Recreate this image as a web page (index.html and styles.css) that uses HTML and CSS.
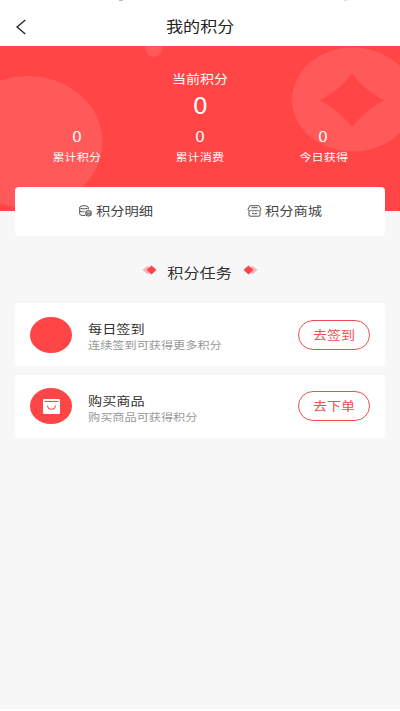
FILE: index.html
```html
<!DOCTYPE html>
<html lang="zh-CN">
<head>
<meta charset="utf-8">
<title>我的积分</title>
<link rel="stylesheet" href="styles.css">
</head>
<body>
<main class="screen">
  <header class="navbar">
    <svg class="back" width="12" height="16" viewBox="0 0 12 16"><path d="M10.3 1 2 8l8.300 7" /></svg>
    <h1 class="title"><span class="wide">我的积分</span></h1>
    <i class="speck speck-a"></i><i class="speck speck-b"></i>
  </header>
  <section class="hero">
    <svg class="hero-art" width="400" height="165" viewBox="0 46 400 165">
      <ellipse cx="28" cy="142" rx="74.500" ry="66" />
      <ellipse cx="154" cy="46" rx="9" ry="11" />
      <path fill-rule="evenodd" d="M292 99.500a61 52 0 1 0 122 0a61 52 0 1 0-122 0zM352 73Q364 90 384 100.500Q364 111 352 127.500Q340 111 320 100.500Q340 90 352 73z" />
    </svg>
    <div class="current"><span class="wide">当前积分</span></div>
    <div class="total"><span class="wide">0</span></div>
    <div class="stats">
      <div class="stat"><b class="wide">0</b><span class="wide">累计积分</span></div>
      <div class="stat"><b class="wide">0</b><span class="wide">累计消费</span></div>
      <div class="stat"><b class="wide">0</b><span class="wide">今日获得</span></div>
    </div>
  </section>
  <nav class="links">
    <a class="link">
      <svg width="13" height="12" viewBox="0 0 13 12"><ellipse cx="5" cy="2.300" rx="4.300" ry="1.600"/><path d="M.7 2.300v6.700c0 .9 1.700 1.500 4.300 1.500h1M9.300 2.300v2M.7 5.500c0 1 2 1.400 4.800 1.400"/><path class="coin" d="M6.800 6.200q2.700-1.700 5.400 0v4.200q-2.700 1.500-5.400 0zM6.800 7.600q2.700 1.200 5.400 0M6.800 9q2.700 1.200 5.400 0"/></svg>
      <span class="wide left">积分明细</span>
    </a>
    <a class="link">
      <svg width="15" height="12" viewBox="0 0 15 12"><path d="M3 .7h9l2 3.500c0 2-2.700 2.300-3.400.7-.8 1.500-2.700 1.500-3.100 0-.5 1.500-2.500 1.500-3.100 0C3.600 6.500 1 6.200 1 4.200zM2 6.200v4q0 1 1 1h9q1 0 1-1v-4M4.500 2.700h6M5 8.200q2.500 1.400 5 0"/></svg>
      <span class="wide left">积分商城</span>
    </a>
  </nav>
  <h2 class="section-title">
    <svg width="16" height="10" viewBox="0 0 16 10"><path class="pale" d="M5.500 1 10.500 5l-5 4L.5 5z"/><path d="M9.500.5 14.500 5l-5 4.500L4.500 5z"/></svg>
    <span class="wide">积分任务</span>
    <svg width="16" height="10" viewBox="0 0 16 10"><path class="pale" d="M10.500 1 15.500 5l-5 4-5-4z"/><path d="M6.500.5 11.500 5l-5 4.500L1.500 5z"/></svg>
  </h2>
  <section class="tasks">
    <article class="task">
      <div class="badge"></div>
      <div class="info"><h3><span class="wide left">每日签到</span></h3><p><span class="wide left">连续签到可获得更多积分</span></p></div>
      <button class="action"><span class="wide">去签到</span></button>
    </article>
    <article class="task">
      <div class="badge"><svg width="17" height="15" viewBox="0 0 17 15"><rect width="17" height="15" rx="1.200"/><path class="rim" d="M1.500 2.500h14"/><path class="smile" d="M4.500 6.500c.5 5 7.500 5 8 0"/></svg></div>
      <div class="info"><h3><span class="wide left">购买商品</span></h3><p><span class="wide left">购买商品可获得积分</span></p></div>
      <button class="action"><span class="wide">去下单</span></button>
    </article>
  </section>
</main>
</body>
</html>
```

FILE: styles.css
```css
* { box-sizing: border-box; }
body { margin: 0; background: #fff; font-family: "Noto Sans CJK SC", sans-serif; }
h1, h2, h3, p { margin: 0; font-weight: 400; }
svg { display: block; flex: none; }

.screen { height: 709px; background: #f7f7f7; overflow: hidden; }

/* Type is set slightly extended throughout */
.wide { display: inline-block; transform: scaleX(1.17); white-space: nowrap; }
.left { transform-origin: left center; }

.navbar { position: relative; height: 46px; padding: 12px 16px 0; background: #fff; display: flex; justify-content: center; }
.back { position: absolute; left: 15px; top: 18.5px; fill: none; stroke: #222; stroke-width: 1.3; }
.title { font-size: 14.6px; line-height: 28px; color: #222; }
.speck { position: absolute; top: 0; width: 4px; height: 1px; background: #bbb; }
.speck-a { left: 119px; }
.speck-b { left: 344px; width: 3px; background: #ddd; }

.hero { position: relative; height: 165px; padding-top: 23px; background: #ff4545; color: #fff; text-align: center; }
.hero-art { position: absolute; left: 0; top: 0; fill: #ff5959; }
.hero > div { position: relative; }
.current { font-size: 12px; line-height: 20px; }
.total { font-size: 22.5px; line-height: 30px; }
.stats { display: grid; grid-template-columns: repeat(3, 123.3px); justify-content: center; padding-top: 6px; }
.stat { display: flex; flex-direction: column; align-items: center; }
.stat b { font-weight: 400; font-size: 14.5px; line-height: 21px; }
.stat span { font-size: 10.4px; line-height: 21px; }

.links { position: relative; height: 49px; margin: -24px 15px 0; padding-bottom: 1px; background: #fff; border-radius: 4px; display: flex; }
.link { flex: 1; display: flex; align-items: center; padding-left: 64px; gap: 4px; font-size: 12.2px; color: #444; }
.link + .link { padding-left: 48px; margin-left: -9px; margin-right: 9px; gap: 3px; }
.link svg { fill: none; stroke: #555; stroke-width: 1; }
.link .coin { fill: #bbb; stroke-width: .8; }

.section-title { height: 67px; padding-top: 4px; display: flex; align-items: center; justify-content: center; gap: 10px; font-size: 13.8px; color: #333; }
.section-title svg { fill: #ff4545; margin-top: -4px; }
.section-title .pale { fill: #ffb3b3; }
.section-title .wide { margin: 0 4px; }

.tasks { margin: 0 15px; display: grid; gap: 8.500px; }
.task { height: 63px; padding: 0 15px; background: #fff; border-radius: 4px; display: flex; align-items: center; }
.badge { width: 42px; height: 36px; border-radius: 50%; background: #ff4545; display: flex; align-items: center; justify-content: center; }
.badge svg { fill: #fff; }
.badge path { fill: none; stroke: #ff4545; stroke-width: 1.1; }
.info { flex: 1; padding: 3px 0 0 16px; }
.info h3 { font-size: 12.1px; line-height: 17px; color: #333; }
.info p { font-size: 10.4px; line-height: 15px; color: #999; }
.action { width: 72px; height: 30px; padding: 0; border: 1px solid #f05050; border-radius: 15px; background: #fff; color: #f05050; font: 12px/26px "Noto Sans CJK SC", sans-serif; }
```
